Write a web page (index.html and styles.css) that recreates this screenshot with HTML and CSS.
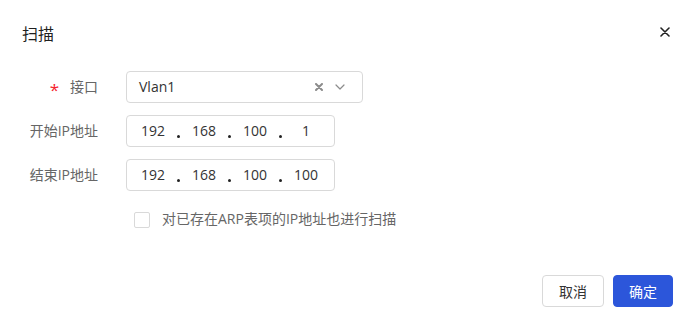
FILE: index.html
```html
<!DOCTYPE html>
<html lang="zh">
<head>
<meta charset="utf-8">
<title>扫描</title>
<link rel="stylesheet" href="styles.css">
</head>
<body>
<div class="dialog">
  <div class="header">
    <div class="title">扫描</div>
    <button class="close" aria-label="关闭">
      <svg width="10" height="10" viewBox="0 0 10 10"><path d="M1 1L9 9M9 1L1 9" stroke="#222" stroke-width="1.6" stroke-linecap="round"/></svg>
    </button>
  </div>
  <div class="form">
    <div class="label"><span class="req">*</span>接口</div>
    <div class="select">
      <span class="value">Vlan1</span>
      <span class="icons">
        <svg class="clear" width="8" height="8" viewBox="0 0 8 8"><path d="M1 1L7 7M7 1L1 7" stroke="#8c8c8c" stroke-width="2" stroke-linecap="round"/></svg>
        <svg class="arrow" width="10" height="6" viewBox="0 0 10 6"><path d="M1 1L5 5L9 1" fill="none" stroke="#8c8c8c" stroke-width="1.2" stroke-linecap="round" stroke-linejoin="round"/></svg>
      </span>
    </div>

    <div class="label">开始IP地址</div>
    <div class="ip">
      <span class="seg">192</span><span class="dot"></span><span class="seg">168</span><span class="dot"></span><span class="seg">100</span><span class="dot"></span><span class="seg">1</span>
    </div>

    <div class="label">结束IP地址</div>
    <div class="ip">
      <span class="seg">192</span><span class="dot"></span><span class="seg">168</span><span class="dot"></span><span class="seg">100</span><span class="dot"></span><span class="seg">100</span>
    </div>

    <div class="label"></div>
    <label class="check">
      <span class="box"></span>
      <span class="check-text">对已存在ARP表项的IP地址也进行扫描</span>
    </label>
  </div>
  <div class="footer">
    <button class="btn">取消</button>
    <button class="btn primary">确定</button>
  </div>
</div>
</body>
</html>
```

FILE: styles.css
```css
* { box-sizing: border-box; }
html, body {
  margin: 0;
  padding: 0;
  background: #fff;
  font-family: "Open Sans", "Noto Sans CJK SC", sans-serif;
  font-size: 14px;
  line-height: 20px;
  color: #333;
}
.dialog {
  width: 695px;
  height: 327px;
  display: flex;
  flex-direction: column;
}
.header {
  height: 68px;
  padding: 0 25px 0 22px;
  display: flex;
  align-items: center;
  justify-content: space-between;
}
.title {
  font-size: 16px;
  color: #1f1f1f;
  line-height: 20px;
}
.close {
  border: 0;
  background: none;
  padding: 0;
  width: 10px;
  height: 10px;
  margin-top: -5px;
  display: flex;
  cursor: pointer;
}
.form {
  margin-top: 3px;
  display: grid;
  grid-template-columns: 98px auto;
  column-gap: 28px;
  row-gap: 12px;
  justify-content: start;
}
.label {
  height: 32px;
  display: flex;
  align-items: center;
  justify-content: flex-end;
  color: #666;
  white-space: nowrap;
}
.req {
  color: #f5222d;
  margin-right: 11px;
  font-size: 17px;
  position: relative;
  top: 3px;
}
.select {
  width: 237px;
  height: 32px;
  border: 1px solid #d9d9d9;
  border-radius: 4px;
  display: flex;
  align-items: center;
  justify-content: space-between;
  padding: 0 17px 0 12px;
  color: #333;
}
.icons {
  display: flex;
  align-items: center;
  gap: 12px;
}
.ip {
  width: 209px;
  height: 32px;
  border: 1px solid #d9d9d9;
  border-radius: 4px;
  display: flex;
  align-items: center;
  padding-left: 6px;
  color: #333;
}
.seg {
  width: 40px;
  text-align: center;
}
.dot {
  width: 11px;
  height: 30px;
  position: relative;
}
.dot::after {
  content: "";
  position: absolute;
  left: 4px;
  top: 19px;
  width: 3px;
  height: 3px;
  border-radius: 50%;
  background: #222;
}
.check {
  height: 32px;
  display: flex;
  align-items: center;
  padding-left: 8px;
  color: #666;
}
.box {
  width: 16px;
  height: 16px;
  border: 1px solid #d9d9d9;
  border-radius: 2px;
  margin-right: 12px;
  margin-top: 1px;
}
.footer {
  margin-top: auto;
  padding: 0 22px 20px 0;
  display: flex;
  justify-content: flex-end;
  gap: 9px;
}
.btn {
  height: 32px;
  width: 62px;
  border: 1px solid #d9d9d9;
  border-radius: 4px;
  background: #fff;
  font-family: inherit;
  font-size: 14px;
  color: #333;
  padding: 0;
}
.btn.primary {
  width: 60px;
  background: #2c56da;
  border-color: #2c56da;
  color: #fff;
}
```
